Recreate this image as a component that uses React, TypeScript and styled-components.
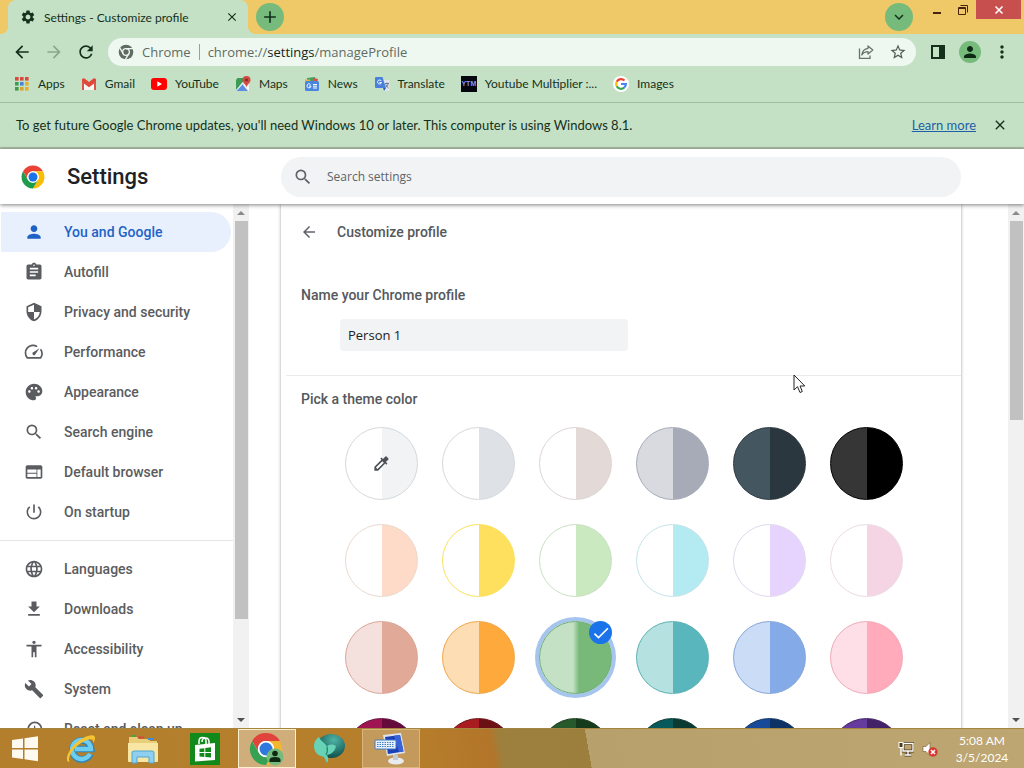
import React from "react";
import styled, { createGlobalStyle, css } from "styled-components";
import {
  MdAccessibility,
  MdArrowBack,
  MdArrowForward,
  MdAssignment,
  MdCheck,
  MdClose,
  MdColorize,
  MdFileDownload,
  MdHistory,
  MdKeyboardArrowDown,
  MdAdd,
  MdLanguage,
  MdMoreVert,
  MdPalette,
  MdPerson,
  MdPowerSettingsNew,
  MdRefresh,
  MdSearch,
  MdSecurity,
  MdSettings,
  MdStarBorder,
  MdWeb,
} from "react-icons/md";

const uiFont = `"Open Sans", "Noto Sans", sans-serif`;
const compactFont = `Lato, "Open Sans", sans-serif`;

const GlobalStyle = createGlobalStyle`
  * { box-sizing: border-box; }
  html, body { margin: 0; height: 100%; overflow: hidden; }
  body { font-family: Roboto, "Liberation Sans", sans-serif; background: #fff; }
  button { border: 0; padding: 0; background: none; font: inherit; color: inherit; }
  a { color: inherit; text-decoration: none; }
  svg { display: block; flex: none; }
`;

const Shell = styled.div`
  height: 100vh;
  display: flex;
  flex-direction: column;
  overflow: hidden;
`;

/* ---------- browser frame ---------- */

const Frame = styled.header`
  flex: none;
  font-family: ${compactFont};
  font-size: 12px;
  color: #15301a;
  background: #c5e1c5;
`;

const TabStrip = styled.div`
  height: 34px;
  display: flex;
  align-items: flex-start;
  background: #efc867;
  padding: 0 3px 0 8px;
`;

const Tab = styled.div`
  position: relative;
  width: 240px;
  height: 34px;
  display: flex;
  align-items: center;
  padding: 0 8px 0 12px;
  margin-right: 8px;
  border-radius: 8px 8px 0 0;
  background: #c5e1c5;
  &::before,
  &::after {
    content: "";
    position: absolute;
    bottom: 0;
    width: 8px;
    height: 8px;
  }
  &::before {
    right: 100%;
    background: radial-gradient(circle at 0 0, transparent 8px, #c5e1c5 8px);
  }
  &::after {
    left: 100%;
    background: radial-gradient(circle at 100% 0, transparent 8px, #c5e1c5 8px);
  }
`;

const TabTitle = styled.span`
  flex: 1;
  margin-left: 8px;
  white-space: nowrap;
`;

const IconButton = styled.button<{ $size?: number; $color?: string }>`
  width: ${(p) => p.$size ?? 24}px;
  height: ${(p) => p.$size ?? 24}px;
  flex: none;
  display: flex;
  align-items: center;
  justify-content: center;
  color: ${(p) => p.$color ?? "#12301a"};
`;

const RoundButton = styled(IconButton)`
  border-radius: 50%;
  background: #76bb7b;
  margin-top: 3px;
`;

const StripRight = styled.div`
  margin-left: auto;
  display: flex;
  align-items: flex-start;
`;

const CaptionButton = styled.button<{ $close?: boolean }>`
  width: ${(p) => (p.$close ? 45 : 26)}px;
  height: 19px;
  display: flex;
  align-items: center;
  justify-content: center;
  color: ${(p) => (p.$close ? "#fff" : "#4a2310")};
  background: ${(p) => (p.$close ? "#c7504e" : "none")};
`;

const CaptionGroup = styled.div`
  display: flex;
  padding-left: 11px;
`;

const Toolbar = styled.div`
  height: 36px;
  display: flex;
  align-items: center;
  padding: 0 10px;
  gap: 8px;
`;

const AddressBar = styled.div`
  flex: 1;
  height: 28px;
  display: flex;
  align-items: center;
  padding: 0 6px 0 10px;
  margin: 0 2px;
  border-radius: 14px;
  background: #eef8f1;
  font-family: ${uiFont};
  font-size: 13px;
  color: #5f6b63;
  white-space: nowrap;
`;

const OmniChip = styled.span`
  margin-left: 8px;
  padding-right: 8px;
  border-right: 1px solid #93a397;
  line-height: 16px;
`;

const Url = styled.span`
  flex: 1;
  margin-left: 8px;
  b { font-weight: 400; color: #15251a; }
`;

const ButtonRow = styled.span<{ $gap: number }>`
  display: flex;
  align-items: center;
  gap: ${(p) => p.$gap}px;
`;

const Bookmarks = styled.nav`
  height: 33px;
  display: flex;
  align-items: center;
  padding: 0 14px 4px;
  gap: 16px;
  border-bottom: 1px solid #9fbd9f;
`;

const Bookmark = styled.a`
  display: flex;
  align-items: center;
  gap: 8px;
  white-space: nowrap;
  line-height: 16px;
`;

const InfoBar = styled.div`
  height: 46px;
  display: flex;
  align-items: center;
  padding: 0 12px 0 16px;
  border-bottom: 2px solid #a9bda7;
  font-size: 13px;
  p { margin: 0; flex: 1; }
  a { color: #1f5fa8; text-decoration: underline; margin-right: 12px; }
`;

/* ---------- settings page ---------- */

const TopBar = styled.div`
  flex: none;
  height: 55px;
  display: flex;
  align-items: center;
  position: relative;
  z-index: 1;
  background: #fff;
  box-shadow: 0 1px 4px rgba(0, 0, 0, 0.5);
`;

const Brand = styled.div`
  width: 281px;
  flex: none;
  display: flex;
  align-items: center;
  padding-left: 21px;
  gap: 22px;
  h1 { margin: 0; font-size: 22px; font-weight: 500; line-height: 28px; color: #202124; }
`;

const SearchBox = styled.label`
  flex: 0 1 680px;
  height: 40px;
  display: flex;
  align-items: center;
  gap: 14px;
  padding: 0 12px;
  border-radius: 20px;
  background: #f1f3f4;
  color: #5f6368;
  input {
    flex: 1;
    border: 0;
    outline: 0;
    background: none;
    padding: 0;
    font: 12px ${uiFont};
    color: #202124;
  }
  input::placeholder { color: #5f6368; opacity: 1; }
`;

const Body = styled.div`
  flex: 1;
  min-height: 0;
  display: flex;
`;

const Sidebar = styled.nav`
  width: 233px;
  flex: none;
  overflow: hidden;
  padding-top: 8px;
  hr { border: 0; border-top: 1px solid #e4e6e8; margin: 8px 0; }
`;

const NavItem = styled.a<{ $active?: boolean }>`
  height: 40px;
  display: flex;
  align-items: center;
  gap: 20px;
  padding-left: 23px;
  margin: 0 2px 0 1px;
  border-radius: 0 20px 20px 0;
  font-size: 14px;
  font-weight: 500;
  white-space: nowrap;
  color: #5a5c60;
  ${(p) =>
    p.$active &&
    css`
      color: #1f62c6;
      background: #e8f0fe;
    `}
`;

const Track = styled.div`
  width: 16px;
  flex: none;
  display: flex;
  flex-direction: column;
  align-items: center;
  background: #f1f1f1;
`;

const TrackArrow = styled.span<{ $down?: boolean }>`
  height: 17px;
  display: flex;
  align-items: center;
  margin-top: ${(p) => (p.$down ? "auto" : 0)};
  &::before {
    content: "";
    border: 4px solid transparent;
    border-top-width: ${(p) => (p.$down ? 4 : 0)}px;
    border-bottom-width: ${(p) => (p.$down ? 0 : 4)}px;
    border-top-color: #505050;
    border-bottom-color: #8a8a8a;
  }
`;

const Thumb = styled.span<{ $share: number }>`
  width: 13px;
  height: ${(p) => p.$share}%;
  background: #c1c1c1;
`;

const Content = styled.main`
  flex: 1;
  min-width: 0;
  overflow: hidden;
  padding-left: 32px;
`;

const Card = styled.section`
  max-width: 680px;
  min-height: 100%;
  background: #fff;
  box-shadow: 0 0 3px rgba(60, 64, 67, 0.5);
`;

const CardHeader = styled.div`
  display: flex;
  align-items: center;
  gap: 16px;
  height: 56px;
  padding-left: 16px;
  h2 { margin: 0; font-size: 14px; font-weight: 500; color: #55585c; }
`;

const SectionTitle = styled.h3`
  margin: 0;
  padding-left: 20px;
  font-size: 14px;
  line-height: 20px;
  font-weight: 500;
  color: #55585c;
`;

const NameBlock = styled.div`
  padding: 25px 0 24px;
  border-bottom: 1px solid #e8eaed;
  margin-left: 5px;
  ${SectionTitle} { padding-left: 15px; }
`;

const NameInput = styled.input`
  display: block;
  width: 288px;
  height: 32px;
  margin: 14px 0 0 54px;
  padding: 0 8px;
  border: 0;
  border-radius: 4px;
  background: #f1f3f4;
  font: 13px ${uiFont};
  color: #202124;
`;

const ThemeBlock = styled.fieldset`
  border: 0;
  margin: 0;
  padding: 13px 0 0;
  min-width: 0;
`;

const SwatchGrid = styled.div`
  display: grid;
  grid-template-columns: repeat(6, 73px);
  gap: 24px;
  padding: 18px 0 0 64px;
`;

const SwatchLabel = styled.label`
  position: relative;
  width: 73px;
  height: 73px;
`;

const Swatch = styled.input<{ $left: string; $right: string; $edge: string }>`
  appearance: none;
  display: block;
  width: 73px;
  height: 73px;
  margin: 0;
  border: 1px solid ${(p) => p.$edge};
  border-radius: 50%;
  background: linear-gradient(to right, ${(p) => p.$left} 37px, ${(p) => p.$right} 37px) border-box;
  &:checked {
    box-shadow: 0 0 0 4px #a6c5ee;
    background: linear-gradient(to right, ${(p) => p.$left} 34px, ${(p) => p.$right} 40px) border-box;
  }
`;

const SwatchIcon = styled.span`
  position: absolute;
  inset: 0;
  display: flex;
  align-items: center;
  justify-content: center;
  color: #4d5156;
`;

const CheckBadge = styled.span`
  position: absolute;
  top: 0;
  right: 0;
  width: 23px;
  height: 23px;
  display: flex;
  align-items: center;
  justify-content: center;
  border-radius: 50%;
  color: #fff;
  background: #1a73e8;
`;

const Pointer = styled.svg`
  position: absolute;
  left: 793px;
  top: 374px;
  z-index: 3;
`;

/* ---------- taskbar ---------- */

const Taskbar = styled.footer`
  flex: none;
  height: 40px;
  display: flex;
  align-items: stretch;
  position: relative;
  z-index: 2;
  border-top: 1px solid #a5843f;
  background: linear-gradient(
    80deg,
    #b37f2d 0%,
    #b67f2b 40%,
    #b3752a 48%,
    #9d803d 49%,
    #9c7f3d 57.4%,
    #b8a06c 57.4%,
    #bda671 100%
  );
`;

const Task = styled.button<{ $state?: "active" | "open" }>`
  width: 62px;
  display: flex;
  align-items: center;
  justify-content: center;
  ${(p) =>
    p.$state &&
    css`
      width: 58px;
      margin: 0 2px;
      border: 1px solid ${p.$state === "active" ? "#fdf0cf" : "#d9b67c"};
      background: ${p.$state === "active" ? "#cfae7c" : "#c49a5c"};
    `}
`;

const StartButton = styled(Task)`
  width: 50px;
`;

const Tray = styled.div`
  margin-left: auto;
  display: flex;
  align-items: center;
  gap: 8px;
  padding-right: 18px;
`;

const Clock = styled.time`
  margin-left: 12px;
  width: 48px;
  white-space: nowrap;
  display: flex;
  flex-direction: column;
  align-items: center;
  font: 12px/17px ${compactFont};
  color: #fff;
`;

/* ---------- drawings ---------- */

const ChromeLogo = ({ size }: { size: number }) => (
  <svg width={size} height={size} viewBox="0 0 48 48">
    <circle cx="24" cy="24" r="23" fill="#fff" />
    <path d="M24 1a23 23 0 0 1 19.9 11.5H24A11.5 11.5 0 0 0 14 29.7L4.1 12.5A23 23 0 0 1 24 1z" fill="#ea4335" />
    <path d="M43.9 12.5A23 23 0 0 1 24 47l10-17.3a11.5 11.5 0 0 0 0-11.4L32 15l-8-2.5z" fill="#fbbc04" />
    <path d="M24 47A23 23 0 0 1 4.1 12.5L14 29.8A11.5 11.5 0 0 0 34 29.7z" fill="#1e9b4b" />
    <circle cx="24" cy="24" r="11.5" fill="#fff" />
    <circle cx="24" cy="24" r="9" fill="#1a73e8" />
  </svg>
);

const ChromeMono = () => (
  <svg width="16" height="16" viewBox="0 0 48 48" fill="none">
    <circle cx="24" cy="24" r="22" fill="#5f6b63" />
    <circle cx="24" cy="24" r="10" stroke="#eef8f1" strokeWidth="4" />
    <path d="M24 14h21M15.500 29L5 11M32.500 29L22 47" stroke="#eef8f1" strokeWidth="4" />
  </svg>
);

const AppsIcon = () => {
  const colors = ["#d9483b", "#d9483b", "#d9483b", "#3f9a52", "#4a84d8", "#e6ae35", "#3f9a52", "#d9a52e", "#e6ae35"];
  return (
    <svg width="16" height="16" viewBox="0 0 16 16">
      {colors.map((c, i) => (
        <rect key={i} x={1 + (i % 3) * 5} y={1 + Math.floor(i / 3) * 5} width="3.600" height="3.600" fill={c} />
      ))}
    </svg>
  );
};

const GmailIcon = () => (
  <svg width="16" height="16" viewBox="0 0 16 16">
    <path d="M2 5l6 5 6-5v9H2z" fill="#f3f6f2" />
    <path d="M1 3.200Q2.500 1.500 4.200 3L8 6l3.800-3Q13.500 1.500 15 3.200V6l-7 5.300L1 6z" fill="#e0483c" />
    <path d="M1 5v9h2V6.500z" fill="#d8564c" />
    <path d="M15 5v9h-2V6.500z" fill="#d8564c" />
  </svg>
);

const YouTubeIcon = () => (
  <svg width="16" height="16" viewBox="0 0 16 16">
    <rect y="2" width="16" height="12" rx="3" fill="#f00" />
    <path d="M6.300 5.300v5.400L11 8z" fill="#fff" />
  </svg>
);

const MapsIcon = () => (
  <svg width="16" height="16" viewBox="0 0 16 16">
    <rect x="1" y="2" width="13" height="13" rx="1.500" fill="#e8eef0" />
    <path d="M1 3.500V14L11 2H2.500z" fill="#3c9b55" />
    <path d="M1.500 15L8 8l6.500 7z" fill="#5b8ee2" />
    <path d="M8 9l5 6h1V11L10 7z" fill="#f5f5f5" />
    <path d="M11.500 0a4 4 0 0 1 4 4c0 2.500-2.500 3.500-4 7-1.500-3.500-4-4.500-4-7a4 4 0 0 1 4-4z" fill="#d34a41" />
    <circle cx="11.500" cy="4" r="1.400" fill="#7c2722" />
  </svg>
);

const NewsIcon = () => (
  <svg width="16" height="16" viewBox="0 0 16 16">
    <path d="M3 2l8-1 1 5H3z" fill="#42a05b" />
    <path d="M10 2l4 1-1 5H9z" fill="#db5147" />
    <path d="M1 3.500h5L7 8H1z" fill="#e9b33d" />
    <rect x="1" y="5" width="14" height="10" rx="1.500" fill="#4a86e0" />
    <path d="M6.500 8.500A2 2 0 1 0 7 10H5M9 8.500h4M9 10.200h4M9 12h4" stroke="#fff" fill="none" />
  </svg>
);

const TranslateIcon = () => (
  <svg width="16" height="16" viewBox="0 0 16 16">
    <path d="M6 4h8.500a1 1 0 0 1 1 1v9a1 1 0 0 1-1 1H9z" fill="#dfe5ea" />
    <path d="M2 1h6.500L12 12H2a1 1 0 0 1-1-1V2a1 1 0 0 1 1-1z" fill="#4a80dc" />
    <path d="M9 12h3l-2 3z" fill="#2f5cb0" />
    <path d="M7.300 5A2 2 0 1 0 7.500 6.500H5.500" stroke="#fff" fill="none" />
    <path d="M11 7.500h4M13 6.500v1M14.300 7.500Q13.500 10 12 11M11.800 8.500Q13 11 14.500 12" stroke="#6b7c8a" fill="none" />
  </svg>
);

const YtmBadge = styled.span`
  width: 16px;
  height: 16px;
  overflow: hidden;
  display: flex;
  align-items: center;
  justify-content: center;
  background: #07070f;
  color: #8b94f0;
  font: 700 7px/16px "Liberation Sans", sans-serif;
`;

const GoogleIcon = () => (
  <svg width="16" height="16" viewBox="0 0 16 16" fill="none" strokeWidth="2.200">
    <circle cx="8" cy="8" r="8" fill="#fff" />
    <path d="M11.500 4.500A4.900 4.900 0 0 0 3.700 5.700" stroke="#ea4335" />
    <path d="M3.700 5.700a4.900 4.900 0 0 0 0 4.600" stroke="#fbbc05" />
    <path d="M3.700 10.300a4.900 4.900 0 0 0 7.500 1.300" stroke="#34a853" />
    <path d="M11.200 11.600A4.900 4.900 0 0 0 12.900 8H8" stroke="#4285f4" />
  </svg>
);

const ShareIcon = () => (
  <svg width="16" height="16" viewBox="0 0 16 16" fill="none" stroke="#66736a" strokeWidth="1.300">
    <path d="M1.500 4.500v9.800H12V11.500" />
    <path d="M10 2l4.800 4L10 10V7.700C7 7.700 5.200 8.700 3.800 11 4.200 7.500 6.300 4.800 10 4.300z" strokeLinejoin="round" />
  </svg>
);

const PanelIcon = () => (
  <svg width="16" height="16" viewBox="0 0 16 16">
    <path d="M1 1h14v14H1zM3 3v10h6V3z" fillRule="evenodd" fill="#12301a" />
  </svg>
);

const Avatar = styled.button`
  width: 22px;
  height: 22px;
  display: flex;
  align-items: center;
  justify-content: center;
  border-radius: 50%;
  color: #0d2913;
  background: #76bb7b;
`;

const SpeedIcon = () => (
  <svg width="20" height="20" viewBox="0 0 24 24" fill="none" stroke="currentColor" strokeWidth="2">
    <path d="M19.900 8.800A9 9 0 0 1 20 19H4A9 9 0 0 1 15.800 5.600" />
    <path d="M18.500 7.500l-5.200 7.800a1.800 1.800 0 0 1-2.600-2.600z" fill="currentColor" stroke="none" />
  </svg>
);

const WrenchIcon = () => (
  <svg width="20" height="20" viewBox="0 0 24 24" fill="currentColor">
    <path d="M22.700 19l-9.100-9.100c.9-2.300.4-5-1.500-6.900-2-2-5-2.400-7.400-1.300L9 6 6 9 1.600 4.700C.4 7.100.9 10.100 2.900 12.100c1.900 1.900 4.600 2.400 6.900 1.500l9.100 9.100c.4.4 1 .4 1.400 0l2.300-2.300c.5-.4.5-1.100.1-1.400z" />
  </svg>
);

const WindowsLogo = () => (
  <svg width="28" height="28" viewBox="0 0 28 28" fill="#fffaf0">
    <path d="M1 5l11-1.600V13H1zM13.500 3.200L27 1.200V13H13.500zM1 14.500h11v9.600L1 22.500zM13.500 14.500H27v11.800l-13.500-2z" />
  </svg>
);

const ExplorerLogo = () => (
  <svg width="32" height="32" viewBox="0 0 32 32" fill="none">
    <path d="M25.500 21A9.500 9.500 0 1 1 26.300 16H10" stroke="#2a86bb" strokeWidth="6.500" />
    <path d="M25 20.800A9.500 9.500 0 1 1 26 16H10" stroke="#6fcdf0" strokeWidth="4.500" />
    <path d="M4.500 29C-2 29 4 12 18 5c7-3.500 12-4 12 0 0 2-1 4-2 5 1-4-2-5-8-2C9 13 2 24 4.500 29z" fill="#f7c431" />
  </svg>
);

const FolderLogo = () => (
  <svg width="34" height="32" viewBox="0 0 34 32">
    <path d="M3 4h8l2 2h10l1 2h7v20H3z" fill="#e9ce7a" />
    <path d="M2 10h30v18a1 1 0 0 1-1 1H3a1 1 0 0 1-1-1z" fill="#f7e6a4" />
    <path d="M5 2h5v2H5z" fill="#4ba24c" />
    <path d="M12 3.500h6v2h-6z" fill="#d74a3c" />
    <path d="M22 5h6v2h-6z" fill="#3f8fd6" />
    <path d="M6 30V20q0-2 2-2h18q2 0 2 2v10h-5v-6H11v6z" fill="#8fd0f0" stroke="#4fa5d4" />
  </svg>
);

const StoreLogo = () => (
  <svg width="30" height="32" viewBox="0 0 30 32">
    <rect width="30" height="32" fill="#128a1b" />
    <path d="M5 12l20-2v17l-20 1.500z" fill="#fff" />
    <path d="M9 11V8q0-3.500 3.500-3.500T16 8v3M12 9q0-4 3.500-4T19 9v2" stroke="#fff" strokeWidth="1.500" fill="none" />
    <path d="M9.500 15.800l4.800-.6v3.800H9.500zM15.300 15l5.700-.7V19h-5.700zM9.500 20h4.800v3.900l-4.800-.4zM15.300 20H21v4.500l-5.700-.5z" fill="#128a1b" />
  </svg>
);

const ChromeTask = () => (
  <svg width="36" height="36" viewBox="0 0 36 36">
    <g transform="translate(1 2)">
      <circle cx="16" cy="16" r="15" fill="#fff" />
      <path d="M16 0a16 16 0 0 1 13.900 8H16A8 8 0 0 0 9 20L2.100 8A16 16 0 0 1 16 0z" fill="#e0443a" />
      <path d="M29.900 8A16 16 0 0 1 16 32l7-12a8 8 0 0 0-7-12z" fill="#f2b632" />
      <path d="M16 32A16 16 0 0 1 2.100 8L9 20a8 8 0 0 0 14 0z" fill="#36a053" />
      <circle cx="16" cy="16" r="8" fill="#fff" />
      <circle cx="16" cy="16" r="6.500" fill="#2f78de" />
    </g>
    <circle cx="26" cy="26" r="8.500" fill="#76bb7b" />
    <circle cx="26" cy="22.500" r="2.800" fill="#0d2913" />
    <path d="M20.500 31v-2q0-3 5.500-3t5.500 3v2z" fill="#0d2913" />
  </svg>
);

const OrbLogo = () => (
  <svg width="34" height="32" viewBox="0 0 34 32">
    <defs>
      <radialGradient id="orb" cx="60%" cy="25%" r="75%">
        <stop offset="0" stopColor="#4fb3a6" />
        <stop offset="1" stopColor="#0f4f4c" />
      </radialGradient>
    </defs>
    <ellipse cx="19" cy="13" rx="14" ry="12" fill="url(#orb)" />
    <path d="M7 4C2 7 1 13 3 18c2 4 6 5 9 6l3 6c2-3 1-6 0-8 5-1 8-4 9-9-4-2-7-2-9 1C13 9 8 8 7 4z" fill="#66d2b6" />
    <path d="M15 14c1 3 0 6-1 8" stroke="#27806f" strokeWidth="1.200" fill="none" />
  </svg>
);

const KeyboardLogo = () => (
  <svg width="34" height="34" viewBox="0 0 34 34">
    <path d="M9 3l18-2 4 20-18 3z" fill="#dfe3ea" />
    <path d="M11 5l15-2 3.500 16.500L14 22z" fill="#1c3fb5" />
    <path d="M20 3.800l6-.8 3.500 16.500L25 20z" fill="#3a63da" />
    <ellipse cx="22" cy="29" rx="8" ry="3.500" fill="#e8eaee" />
    <path d="M19 23h5v5h-5z" fill="#c4c8d0" />
    <rect x="1" y="8" width="21" height="9" rx="1" fill="#e7f0fb" stroke="#3f7fc4" />
    <path d="M3 10.500h17M3 12.500h17M3 14.500h17" stroke="#3f7fc4" strokeDasharray="1.500 1" />
  </svg>
);

const NetworkIcon = () => (
  <svg width="16" height="16" viewBox="0 0 16 16" fill="none">
    <path d="M5 2.500h10v7.500H5zM10 10v3.500M6.500 14h7" stroke="#4b3a1c" strokeWidth="3" />
    <path d="M5 2.500h10v7.500H5zM10 10v3.500M6.500 14h7" stroke="#fff" strokeWidth="1.400" />
    <rect x="1" y="1.500" width="4" height="5" fill="#4b3a1c" stroke="#fff" />
    <path d="M3 6.500v8" stroke="#fff" strokeWidth="1.400" />
  </svg>
);

const MutedIcon = () => (
  <svg width="16" height="16" viewBox="0 0 16 16">
    <path d="M1 5.500h3L8 1.500v13l-4-4H1z" fill="#fff" stroke="#6b5732" strokeWidth=".6" />
    <circle cx="11" cy="11" r="4.700" fill="#d53a32" />
    <path d="M9 9l4 4M13 9l-4 4" stroke="#fff" strokeWidth="1.500" />
  </svg>
);

/* ---------- data ---------- */

const bookmarks = [
  { label: "Apps", icon: <AppsIcon /> },
  { label: "Gmail", icon: <GmailIcon /> },
  { label: "YouTube", icon: <YouTubeIcon /> },
  { label: "Maps", icon: <MapsIcon /> },
  { label: "News", icon: <NewsIcon /> },
  { label: "Translate", icon: <TranslateIcon /> },
  { label: "Youtube Multiplier :...", icon: <YtmBadge>YTM</YtmBadge> },
  { label: "Images", icon: <GoogleIcon /> },
];

const primaryNav = [
  { label: "You and Google", icon: <MdPerson size={20} />, active: true },
  { label: "Autofill", icon: <MdAssignment size={20} /> },
  { label: "Privacy and security", icon: <MdSecurity size={20} /> },
  { label: "Performance", icon: <SpeedIcon /> },
  { label: "Appearance", icon: <MdPalette size={20} /> },
  { label: "Search engine", icon: <MdSearch size={20} /> },
  { label: "Default browser", icon: <MdWeb size={20} /> },
  { label: "On startup", icon: <MdPowerSettingsNew size={20} /> },
];

const secondaryNav = [
  { label: "Languages", icon: <MdLanguage size={20} /> },
  { label: "Downloads", icon: <MdFileDownload size={20} /> },
  { label: "Accessibility", icon: <MdAccessibility size={20} /> },
  { label: "System", icon: <WrenchIcon /> },
  { label: "Reset and clean up", icon: <MdHistory size={20} /> },
];

const themes = [
  { name: "Custom color", left: "#ffffff", right: "#f1f3f4", edge: "#d5d8db" },
  { name: "Default", left: "#ffffff", right: "#dee1e6", edge: "#d5d8dd" },
  { name: "Warm grey", left: "#ffffff", right: "#e3dad7", edge: "#ddd5d2" },
  { name: "Cool grey", left: "#d8dae0", right: "#a6abb7", edge: "#a6abb7" },
  { name: "Midnight blue", left: "#445660", right: "#2b373e", edge: "#2b373e" },
  { name: "Black", left: "#363636", right: "#000000", edge: "#000000" },
  { name: "Beige", left: "#ffffff", right: "#fddbc8", edge: "#ecd9ce" },
  { name: "Yellow", left: "#ffffff", right: "#ffdf5e", edge: "#f8e25c" },
  { name: "Light green", left: "#ffffff", right: "#cae9c0", edge: "#c9e0c2" },
  { name: "Light blue", left: "#ffffff", right: "#b4eaf2", edge: "#c4e4e8" },
  { name: "Lavender", left: "#ffffff", right: "#e7d4fe", edge: "#e2d8ec" },
  { name: "Rose", left: "#ffffff", right: "#f5d5e3", edge: "#ebdbe2" },
  { name: "Terracotta", left: "#f4e0dc", right: "#e1a997", edge: "#d9a596" },
  { name: "Orange", left: "#fddeb4", right: "#fea93c", edge: "#f0a547" },
  { name: "Green", left: "#c4e1c5", right: "#78b97a", edge: "#6cab73", selected: true },
  { name: "Teal", left: "#b5e1e1", right: "#5ab6bd", edge: "#5ab1b3" },
  { name: "Blue", left: "#cbdcf7", right: "#84aae7", edge: "#84a5d8" },
  { name: "Pink", left: "#ffdfe7", right: "#ffabbb", edge: "#f0a9b7" },
  { name: "Dark pink", left: "#9e1551", right: "#640b3b", edge: "#640b3b" },
  { name: "Dark red", left: "#a91d20", right: "#6b1014", edge: "#6b1014" },
  { name: "Dark green", left: "#28592d", right: "#163a1c", edge: "#163a1c" },
  { name: "Dark teal", left: "#07595b", right: "#0b3a33", edge: "#0b3a33" },
  { name: "Dark blue", left: "#174b99", right: "#0d3264", edge: "#0d3264" },
  { name: "Purple", left: "#653b9d", right: "#432267", edge: "#432267" },
];

const Scrollbar = ({ share }: { share: number }) => (
  <Track>
    <TrackArrow />
    <Thumb $share={share} />
    <TrackArrow $down />
  </Track>
);

export default function App() {
  return (
    <Shell>
      <GlobalStyle />
      <Frame>
        <TabStrip>
          <Tab>
            <MdSettings size={16} />
            <TabTitle>Settings - Customize profile</TabTitle>
            <IconButton $size={16} aria-label="Close tab">
              <MdClose size={14} />
            </IconButton>
          </Tab>
          <RoundButton $size={28} aria-label="New tab">
            <MdAdd size={20} />
          </RoundButton>
          <StripRight>
            <RoundButton $size={28} aria-label="Search tabs">
              <MdKeyboardArrowDown size={18} />
            </RoundButton>
            <CaptionGroup>
              <CaptionButton aria-label="Minimize">
                <svg width="12" height="12" viewBox="0 0 12 12">
                  <path d="M2 8h8v2H2z" fill="currentColor" />
                </svg>
              </CaptionButton>
              <CaptionButton aria-label="Restore">
                <svg width="12" height="12" viewBox="0 0 12 12" fill="none" stroke="currentColor">
                  <path d="M1.500 3.500h7v7h-7zM1 4.500h8M3.500 1.500h7v7" />
                </svg>
              </CaptionButton>
              <CaptionButton $close aria-label="Close">
                <svg width="10" height="10" viewBox="0 0 10 10" stroke="currentColor" strokeWidth="1.600">
                  <path d="M1.500 1.500l7 7M8.500 1.500l-7 7" />
                </svg>
              </CaptionButton>
            </CaptionGroup>
          </StripRight>
        </TabStrip>

        <Toolbar>
          <IconButton aria-label="Back">
            <MdArrowBack size={20} />
          </IconButton>
          <IconButton $color="#8aa68c" aria-label="Forward">
            <MdArrowForward size={20} />
          </IconButton>
          <IconButton aria-label="Reload">
            <MdRefresh size={20} />
          </IconButton>
          <AddressBar>
            <ChromeMono />
            <OmniChip>Chrome</OmniChip>
            <Url>
              chrome://<b>settings</b>/manageProfile
            </Url>
            <ButtonRow $gap={8}>
              <IconButton aria-label="Share">
                <ShareIcon />
              </IconButton>
              <IconButton $color="#4f5b53" aria-label="Bookmark">
                <MdStarBorder size={18} />
              </IconButton>
            </ButtonRow>
          </AddressBar>
          <ButtonRow $gap={9}>
            <IconButton aria-label="Side panel">
              <PanelIcon />
            </IconButton>
            <Avatar aria-label="Profile">
              <MdPerson size={18} />
            </Avatar>
            <IconButton aria-label="Menu">
              <MdMoreVert size={20} />
            </IconButton>
          </ButtonRow>
        </Toolbar>

        <Bookmarks>
          {bookmarks.map((b) => (
            <Bookmark href="#" key={b.label}>
              {b.icon}
              {b.label}
            </Bookmark>
          ))}
        </Bookmarks>

        <InfoBar>
          <p>To get future Google Chrome updates, you'll need Windows 10 or later. This computer is using Windows 8.1.</p>
          <a href="#">Learn more</a>
          <IconButton aria-label="Dismiss">
            <MdClose size={16} />
          </IconButton>
        </InfoBar>
      </Frame>

      <TopBar>
        <Brand>
          <ChromeLogo size={24} />
          <h1>Settings</h1>
        </Brand>
        <SearchBox>
          <MdSearch size={20} />
          <input type="search" placeholder="Search settings" aria-label="Search settings" />
        </SearchBox>
      </TopBar>

      <Body>
        <Sidebar>
          {primaryNav.map((n) => (
            <NavItem href="#" key={n.label} $active={n.active}>
              {n.icon}
              {n.label}
            </NavItem>
          ))}
          <hr />
          {secondaryNav.map((n) => (
            <NavItem href="#" key={n.label}>
              {n.icon}
              {n.label}
            </NavItem>
          ))}
        </Sidebar>
        <Scrollbar share={76} />
        <Content>
          <Card>
            <CardHeader>
              <IconButton $color="#5f6368" aria-label="Back to settings">
                <MdArrowBack size={18} />
              </IconButton>
              <h2>Customize profile</h2>
            </CardHeader>
            <NameBlock>
              <SectionTitle id="profile-name">Name your Chrome profile</SectionTitle>
              <NameInput type="text" defaultValue="Person 1" aria-labelledby="profile-name" />
            </NameBlock>
            <ThemeBlock aria-labelledby="theme-color">
              <SectionTitle id="theme-color">Pick a theme color</SectionTitle>
              <SwatchGrid>
                {themes.map((t, i) => (
                  <SwatchLabel key={t.name}>
                    <Swatch
                      type="radio"
                      name="theme"
                      aria-label={t.name}
                      defaultChecked={t.selected}
                      $left={t.left}
                      $right={t.right}
                      $edge={t.edge}
                    />
                    {i === 0 && (
                      <SwatchIcon>
                        <MdColorize size={19} />
                      </SwatchIcon>
                    )}
                    {t.selected && (
                      <CheckBadge>
                        <MdCheck size={20} />
                      </CheckBadge>
                    )}
                  </SwatchLabel>
                ))}
              </SwatchGrid>
            </ThemeBlock>
          </Card>
        </Content>
        <Scrollbar share={38} />
      </Body>

      <Taskbar>
        <StartButton aria-label="Start">
          <WindowsLogo />
        </StartButton>
        <Task aria-label="Internet Explorer">
          <ExplorerLogo />
        </Task>
        <Task aria-label="File Explorer">
          <FolderLogo />
        </Task>
        <Task aria-label="Store">
          <StoreLogo />
        </Task>
        <Task $state="active" aria-label="Chrome">
          <ChromeTask />
        </Task>
        <Task aria-label="Orb">
          <OrbLogo />
        </Task>
        <Task $state="open" aria-label="On-screen keyboard">
          <KeyboardLogo />
        </Task>
        <Tray>
          <NetworkIcon />
          <MutedIcon />
          <Clock>
            <span>5:08 AM</span>
            <span>3/5/2024</span>
          </Clock>
        </Tray>
      </Taskbar>

      <Pointer width="13" height="20" viewBox="0 0 13 20">
        <path d="M1 1v15l3.500-3.300L7 18.500l2.300-1L7 12h4.800z" fill="#fff" stroke="#222" />
      </Pointer>
    </Shell>
  );
}
